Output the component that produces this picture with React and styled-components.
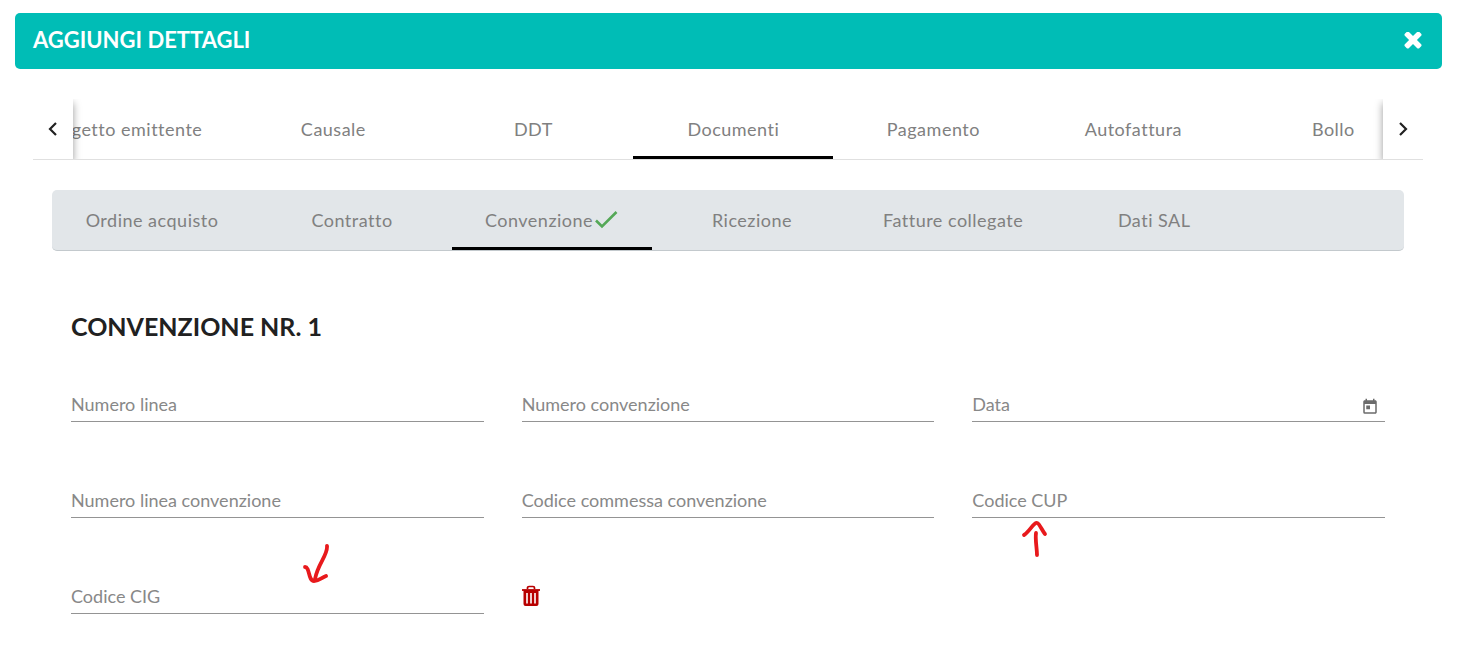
import React, { useState } from 'react'
import styled, { createGlobalStyle } from 'styled-components'
import { MdToday } from 'react-icons/md'

const GlobalStyle = createGlobalStyle`
  * {
    box-sizing: border-box;
  }
  body {
    margin: 0;
    background: #fff;
    color: #212121;
    font-family: Lato, "Open Sans", sans-serif;
    font-size: 18px;
  }
  button, input {
    font: inherit;
  }
`

const Modal = styled.div`
  padding: 13px 29px 40px 15px;
`

const Header = styled.header`
  display: flex;
  justify-content: space-between;
  align-items: center;
  height: 56px;
  padding: 0 20px 0 18px;
  border-radius: 5px;
  background: #00bdb6;
  color: #fff;
`

const Title = styled.h1`
  margin: 0;
  padding-bottom: 2px;
  font-size: 22px;
  line-height: 30px;
  font-weight: 700;
`

const IconButton = styled.button`
  display: flex;
  padding: 0;
  border: 0;
  background: none;
  color: ${props => props.$color || 'inherit'};
  cursor: pointer;
`

const Body = styled.main`
  padding: 30px 19px 0 18px;
`

const TabBar = styled.div`
  display: flex;
  height: 61px;
  overflow: hidden;
  border-bottom: 1px solid #e0e0e0;
`

const Pager = styled.button`
  z-index: 1;
  display: flex;
  flex: 0 0 40px;
  justify-content: center;
  align-items: center;
  padding: 0;
  border: 0;
  background: #fff;
  color: #212121;
  box-shadow: 0 4px 8px rgba(0,0,0,.4);
  cursor: pointer;
`

const Viewport = styled.div`
  flex: 1;
  min-width: 0;
  overflow: hidden;
`

const TabList = styled.div`
  display: flex;
  height: 60px;
  margin-left: ${props => props.$scrolled ? '-63px' : '0'};
`

const Tab = styled.button`
  display: flex;
  flex: 0 0 auto;
  justify-content: center;
  align-items: center;
  gap: 2px;
  min-width: 200px;
  padding: 2px 31px 0;
  border: 0;
  border-bottom: 3px solid ${props => props.$active ? '#000' : 'transparent'};
  background: none;
  color: #808080;
  letter-spacing: 0.5px;
  white-space: nowrap;
  cursor: pointer;
`

const SubTabBar = styled.div`
  height: 61px;
  margin: 30px 19px 0;
  overflow: hidden;
  border-bottom: 1px solid #c3c9cd;
  border-radius: 5px;
  background: #e2e6e9;
`

const Form = styled.form`
  padding: 59px 38px 0;
`

const Heading = styled.h2`
  margin: 0 0 44px;
  font-size: 25px;
  line-height: 32px;
  font-weight: 700;
`

const Fields = styled.div`
  display: grid;
  grid-template-columns: repeat(3, 1fr);
  column-gap: 38px;
  row-gap: 60px;
`

const Field = styled.div`
  position: relative;
  display: grid;
  grid-template-columns: 1fr auto;
  align-items: center;
  height: 36px;
  border-bottom: 1px solid #949494;
`

const Label = styled.label`
  grid-area: 1 / 1;
  color: #888;
  line-height: 24px;
  pointer-events: none;
`

const Input = styled.input`
  grid-area: 1 / 1;
  width: 100%;
  height: 32px;
  padding: 0;
  border: 0;
  outline: 0;
  background: transparent;
`

const DateButton = styled(IconButton)`
  padding: 6px 6px 0;
`

const Actions = styled.div`
  display: flex;
  align-items: center;
  height: 36px;
`

const Mark = styled.svg`
  position: absolute;
  left: ${props => props.$left};
  top: ${props => props.$top};
  fill: none;
  stroke: #e8191c;
  stroke-width: 3.8;
  stroke-linecap: round;
  stroke-linejoin: round;
  pointer-events: none;
`

const Chevron = ({ d }) => (
  <svg width="10" height="16" viewBox="0 0 10 16" fill="none" stroke="currentColor" strokeWidth="2.2">
    <path d={d} />
  </svg>
)

const Check = () => (
  <svg width="24" height="20" viewBox="0 0 24 20" fill="none" stroke="#54a857" strokeWidth="2.6">
    <path d="M1 10.5 L7 16.5 L21.5 2" />
  </svg>
)

const Close = () => (
  <svg width="18" height="18" viewBox="80 406 1248 1248" fill="currentColor">
    <path d="M1298 1322q0 40-28 68l-136 136q-28 28-68 28t-68-28l-294-294-294 294q-28 28-68 28t-68-28l-136-136q-28-28-28-68t28-68l294-294-294-294q-28-28-28-68t28-68l136-136q28-28 68-28t68 28l294 294 294-294q28-28 68-28t68 28l136 136q28 28 28 68t-28 68l-294 294 294 294q28 28 28 68z" />
  </svg>
)

const Trash = () => (
  <svg width="20" height="22" viewBox="1 0 20 22" fill="none" stroke="currentColor">
    <path d="M6.5 4V2.7Q6.5 1.5 8 1.5H12Q13.5 1.5 13.5 2.7V4" strokeWidth="1.7" />
    <path d="M1 5H19" strokeWidth="1.8" />
    <path fill="currentColor" fillRule="evenodd" stroke="none" d="M2.5 5H17.5V19Q17.5 21 15.5 21H4.5Q2.5 21 2.5 19ZM5.2 8V18.5H6.8V8ZM9.2 8V18.5H10.8V8ZM13.2 8V18.5H14.8V8Z" />
  </svg>
)

const tabs = ['Soggetto emittente', 'Causale', 'DDT', 'Documenti', 'Pagamento', 'Autofattura', 'Bollo']
const subTabs = ['Ordine acquisto', 'Contratto', 'Convenzione', 'Ricezione', 'Fatture collegate', 'Dati SAL']

const TextField = ({ id, label, children }) => (
  <Field>
    <Label htmlFor={id}>{label}</Label>
    <Input id={id} type="text" />
    {children}
  </Field>
)

const App = () => {
  const [tab, setTab] = useState('Documenti')
  const [subTab, setSubTab] = useState('Convenzione')

  return (
    <Modal>
      <GlobalStyle />
      <Header>
        <Title>AGGIUNGI DETTAGLI</Title>
        <IconButton type="button" aria-label="Chiudi"><Close /></IconButton>
      </Header>
      <Body>
        <TabBar>
          <Pager type="button" aria-label="Precedente"><Chevron d="M8 2 L2 8 L8 14" /></Pager>
          <Viewport>
            <TabList role="tablist" $scrolled>
              {tabs.map(name => (
                <Tab key={name} type="button" role="tab" aria-selected={name === tab} $active={name === tab} onClick={() => setTab(name)}>
                  {name}
                </Tab>
              ))}
            </TabList>
          </Viewport>
          <Pager type="button" aria-label="Successivo"><Chevron d="M2 2 L8 8 L2 14" /></Pager>
        </TabBar>
        <SubTabBar>
          <TabList role="tablist">
            {subTabs.map(name => (
              <Tab key={name} type="button" role="tab" aria-selected={name === subTab} $active={name === subTab} onClick={() => setSubTab(name)}>
                {name}
                {name === 'Convenzione' && <Check />}
              </Tab>
            ))}
          </TabList>
        </SubTabBar>
        <Form>
          <Heading>CONVENZIONE NR. 1</Heading>
          <Fields>
            <TextField id="numero-linea" label="Numero linea" />
            <TextField id="numero-convenzione" label="Numero convenzione" />
            <TextField id="data" label="Data">
              <DateButton type="button" aria-label="Apri calendario" $color="#6b6b6b"><MdToday size={18} /></DateButton>
            </TextField>
            <TextField id="numero-linea-convenzione" label="Numero linea convenzione" />
            <TextField id="codice-commessa" label="Codice commessa convenzione" />
            <TextField id="codice-cup" label="Codice CUP">
              <Mark $left="48px" $top="38px" width="30" height="38" viewBox="0 0 30 38">
                <path d="M4 15 C9 12 13 4 16 3 C19 2 21 9 25 14 M16 13 C15 20 17 28 17 35" />
              </Mark>
            </TextField>
            <TextField id="codice-cig" label="Codice CIG">
              <Mark $left="230px" $top="-34px" width="30" height="42" viewBox="0 0 30 42">
                <path d="M26 2 C27 11 17 19 14 35 M4 23 C9 23 7 37 13 37 C18 37 20 34 25 32" />
              </Mark>
            </TextField>
            <Actions>
              <IconButton type="button" aria-label="Elimina" $color="#b80000"><Trash /></IconButton>
            </Actions>
          </Fields>
        </Form>
      </Body>
    </Modal>
  )
}

export default App
